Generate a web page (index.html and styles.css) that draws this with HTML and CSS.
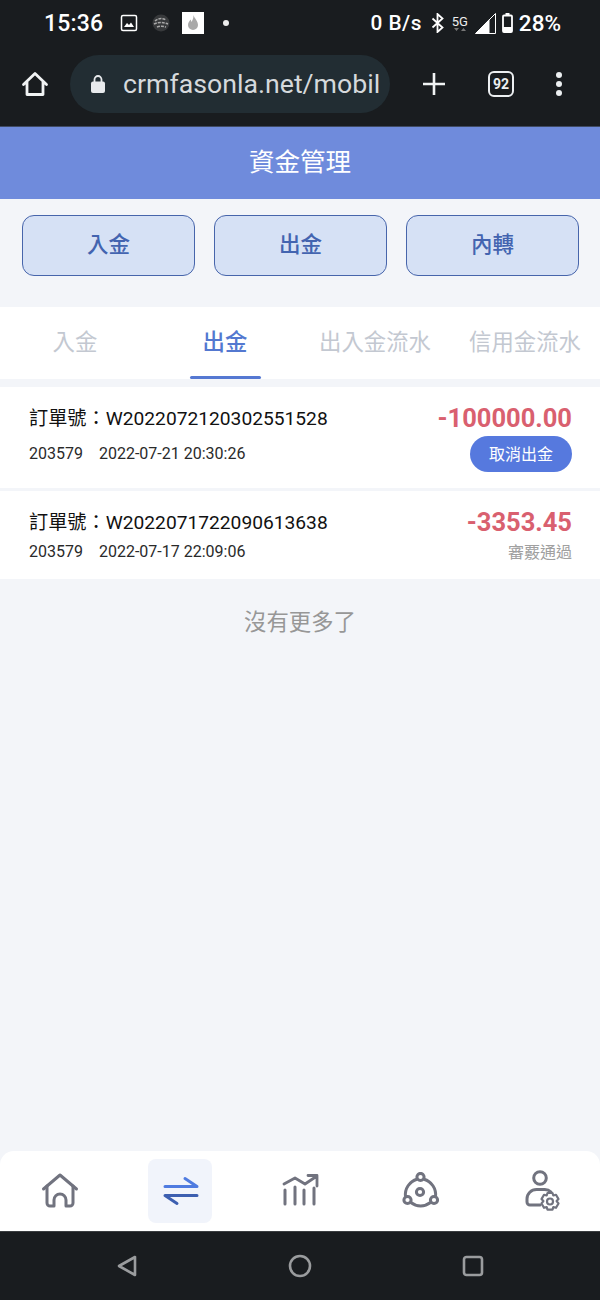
FILE: index.html
```html
<!DOCTYPE html>
<html lang="zh-Hant">
<head>
<meta charset="utf-8">
<title>資金管理</title>
<link rel="stylesheet" href="styles.css">
</head>
<body>
<div class="phone">
  <div class="status">
    <span class="time">15:36</span>
    <svg class="st-pic" width="18" height="18" viewBox="0 0 18 18"><rect x="1.500" y="1.500" width="15" height="15" rx="1.500" fill="none" stroke="#fff" stroke-width="1.500"/><path d="M4 13l3-4 2 2 2-2.500 3 4.500z" fill="#fff"/></svg>
    <svg class="st-ball" width="18" height="18" viewBox="0 0 18 18"><circle cx="9" cy="9" r="8.500" fill="#37393b"/><path d="M3 7c3-3 8-3 11-1M2 10c4-2 9-2 14 0M5 13c3-1 6-1 9 0" stroke="#a8a8a8" stroke-width="1.500" stroke-dasharray="3 1" fill="none"/></svg>
    <svg class="st-flame" width="22" height="22" viewBox="0 0 22 22"><rect width="22" height="22" fill="#fff"/><path d="M11.500 3c.5 3 4.500 5.500 4.500 10a5 5 0 0 1-10 0c0-2.500 1.500-3.500 2.500-5.500.5 1 .7 1.500 1 2.500 1-2 2.200-4 2-7z" fill="#a9a9a9"/></svg>
    <span class="st-dot"></span>
    <span class="st-fill"></span>
    <span class="net">0 B/s</span>
    <svg class="st-bt" width="13" height="20" viewBox="0 0 13 20"><path d="M1.500 5.500l10 9-5 4.500V1l5 4.500-10 9" fill="none" stroke="#fff" stroke-width="1.800"/></svg>
    <span class="five">5G<svg class="five-arrows" width="14" height="4" viewBox="0 0 14 4"><path d="M1 0h5L3.500 3zM8 3h5l-2.500-3z" fill="#777"/></svg></span>
    <svg class="st-sig" width="21" height="21" viewBox="0 0 21 21"><path d="M20.500 .5v20H.5z" fill="none" stroke="#fff"/><path d="M14.500 6v14.500H.5z" fill="#fff"/></svg>
    <svg class="st-bat" width="11" height="20" viewBox="0 0 11 20"><path d="M3.500 0h4v2H3.500z" fill="#fff"/><rect x="1" y="2.500" width="9" height="16.500" rx="1" fill="none" stroke="#fff" stroke-width="1.800"/><rect x="1" y="14" width="9" height="5" fill="#fff"/></svg>
    <span class="batt">28%</span>
  </div>
  <div class="toolbar">
    <svg class="tb-home" width="28" height="28" viewBox="0 0 28 28"><path d="M2.500 14.500 14 3.500l11.500 11M6 12v12.500h16V12" fill="none" stroke="#f1f3f4" stroke-width="2.800" stroke-linejoin="round" stroke-linecap="round"/></svg>
    <div class="omni">
      <svg class="lock" width="16" height="20" viewBox="0 0 16 20"><path d="M4.500 8V5.500a3.500 3.500 0 0 1 7 0V8" fill="none" stroke="#e8eaed" stroke-width="1.800"/><rect x="1" y="7.500" width="14" height="11.500" rx="2" fill="#e8eaed"/></svg>
      <span class="url">crmfasonla.net/mobil</span>
    </div>
    <svg class="tb-plus" width="24" height="24" viewBox="0 0 24 24"><path d="M12 1v22M1 12h22" stroke="#f1f3f4" stroke-width="2.600"/></svg>
    <span class="tabs-count">92</span>
    <span class="menu"><i></i><i></i><i></i></span>
  </div>
  <header class="title">資金管理</header>
  <div class="actions">
    <button class="act">入金</button>
    <button class="act">出金</button>
    <button class="act">內轉</button>
  </div>
  <nav class="tabs">
    <span class="tab">入金</span>
    <span class="tab on">出金</span>
    <span class="tab">出入金流水</span>
    <span class="tab">信用金流水</span>
  </nav>
  <section class="card first">
    <div class="col">
      <div class="order">訂單號：W2022072120302551528</div>
      <div class="meta meta-a"><span>203579</span><span>2022-07-21 20:30:26</span></div>
    </div>
    <div class="col right">
      <div class="amount">-100000.00</div>
      <button class="cancel">取消出金</button>
    </div>
  </section>
  <section class="card second">
    <div class="col">
      <div class="order">訂單號：W2022071722090613638</div>
      <div class="meta meta-b"><span>203579</span><span>2022-07-17 22:09:06</span></div>
    </div>
    <div class="col right">
      <div class="amount">-3353.45</div>
      <div class="state">審覈通過</div>
    </div>
  </section>
  <div class="nomore">沒有更多了</div>
  <div class="bottom">
    <span class="nav-item">
      <svg width="38" height="38" viewBox="0 0 38 38"><path d="M2.500 17 19 3l16.500 14" fill="none" stroke="#71737f" stroke-width="3" stroke-linecap="round" stroke-linejoin="round"/><path d="M6 14v17a3 3 0 0 0 3 3h4v-6a6 6 0 0 1 12 0v6h4a3 3 0 0 0 3-3V14" fill="none" stroke="#71737f" stroke-width="3" stroke-linecap="round" stroke-linejoin="round"/></svg>
    </span>
    <span class="nav-item active">
      <svg width="38" height="30" viewBox="0 0 38 30"><path d="M4 10.500h32L24 2.500" fill="none" stroke="#4f7be0" stroke-width="3" stroke-linecap="round" stroke-linejoin="round"/><path d="M36 19.500H4l12 8" fill="none" stroke="#3d5fb0" stroke-width="3" stroke-linecap="round" stroke-linejoin="round"/></svg>
    </span>
    <span class="nav-item">
      <svg width="38" height="36" viewBox="0 0 38 36"><path d="M4 17v14M14 14v17M23 17v14M33 15v16" fill="none" stroke="#71737f" stroke-width="3" stroke-linecap="round"/><path d="M3 11l11-6 10 6L36 3M27 2.500h9V13" fill="none" stroke="#71737f" stroke-width="2.800" stroke-linecap="round" stroke-linejoin="round"/></svg>
    </span>
    <span class="nav-item">
      <svg width="38" height="38" viewBox="0 0 38 38"><g fill="none" stroke="#71737f" stroke-width="3"><circle cx="19.500" cy="5" r="3.600"/><circle cx="6.500" cy="28" r="3.600"/><circle cx="33" cy="28" r="3.600"/><circle cx="19" cy="20" r="3.600"/><path d="M16 7.200A16 16 0 0 0 4.500 24.500M23 7.200a16 16 0 0 1 11.500 17.300M9.800 30.500a16 16 0 0 0 19.700 0"/></g></svg>
    </span>
    <span class="nav-item">
      <svg width="40" height="44" viewBox="0 0 40 44"><g fill="none" stroke="#71737f" stroke-width="3" stroke-linecap="round"><circle cx="20" cy="9" r="6.300"/><path d="M20 36H10a3 3 0 0 1-3-3v-3a9.500 9.500 0 0 1 9.500-9.500h8a9 9 0 0 1 6.500 2.500"/></g><g transform="translate(2.500 2.500)" fill="none" stroke="#71737f" stroke-width="2.200"><circle cx="27.500" cy="30" r="3"/><path d="M25 21.500h5l.8 2.500 2.700-.7 2.500 4.300-1.900 2 1.900 2.400-2.500 4.300-2.700-.7-.8 2.500h-5l-.8-2.500-2.700.7-2.500-4.300 1.900-2.400-1.900-2 2.500-4.300 2.700.7z" stroke-linejoin="round"/></g></svg>
    </span>
  </div>
  <div class="sysnav">
    <svg width="24" height="24" viewBox="0 0 24 24"><path d="M20 3v18L4 12z" fill="none" stroke="#9a9c9e" stroke-width="2.600" stroke-linejoin="round"/></svg>
    <svg width="24" height="24" viewBox="0 0 24 24"><circle cx="12" cy="12" r="10" fill="none" stroke="#9a9c9e" stroke-width="2.600"/></svg>
    <svg width="24" height="24" viewBox="0 0 24 24"><rect x="3" y="3" width="18" height="18" rx="2.500" fill="none" stroke="#9a9c9e" stroke-width="2.600"/></svg>
  </div>
</div>
</body>
</html>
```

FILE: styles.css
```css
* { box-sizing: border-box; }
html, body { margin: 0; padding: 0; }
body {
  width: 600px;
  height: 1300px;
  overflow: hidden;
  font-family: Roboto, "Noto Sans CJK TC", sans-serif;
  background: #f3f5f9;
}
.phone { display: flex; flex-direction: column; width: 600px; height: 1300px; }

.status {
  display: flex;
  align-items: center;
  height: 46px;
  padding: 0 39px 0 44px;
  background: #191c1f;
  color: #fff;
  flex: none;
}
.time { font-size: 23px; font-weight: 500; width: 76px; letter-spacing: .2px; }
.st-ball { margin-left: 14px; }
.st-flame { margin-left: 12px; }
.st-dot { width: 6px; height: 6px; border-radius: 50%; background: #ececec; margin-left: 19px; }
.st-fill { flex: 1; }
.net { font-size: 20.800px; font-weight: 500; letter-spacing: .5px; }
.st-bt { margin-left: 9px; }
.five { display: flex; flex-direction: column; align-items: center; font-size: 13px; line-height: 13px; margin-left: 8px; color: #eee; width: 16px; }
.five-arrows { display: block; }
.st-sig { margin-left: 7px; }
.st-bat { margin-left: 6px; }
.batt { font-size: 22.500px; font-weight: 500; margin-left: 6px; }

.toolbar {
  display: flex;
  align-items: center;
  height: 80px;
  padding: 0 0 4px 21px;
  background: #191c1f;
  flex: none;
}
.omni {
  display: flex;
  align-items: center;
  width: 320px;
  height: 58px;
  margin-left: 21px;
  padding-left: 20px;
  border-radius: 29px;
  background: #222d33;
  overflow: hidden;
}
.url { margin-left: 17px; font-size: 26.700px; color: #d5d9dc; white-space: nowrap; }
.tb-plus { margin-left: 32px; }
.tabs-count {
  display: flex;
  align-items: center;
  justify-content: center;
  width: 26px;
  height: 26px;
  margin-left: 42px;
  border: 2.500px solid #eceff1;
  border-radius: 6px;
  font-size: 14px;
  font-weight: 700;
  color: #eceff1;
}
.menu { display: flex; flex-direction: column; gap: 3px; margin-left: 42px; }
.menu i { display: block; width: 6px; height: 6px; border-radius: 50%; background: #eceff1; }

.title {
  flex: none;
  height: 73px;
  padding-bottom: 8px;
  border-top: 1px solid #3f4a63;
  display: flex;
  align-items: center;
  justify-content: center;
  background: #6f8bdc;
  color: #fff;
  font-size: 25.500px;
}

.actions {
  flex: none;
  display: flex;
  justify-content: space-between;
  padding: 16px 21px 0 22px;
  height: 108px;
}
.act {
  width: 173px;
  height: 61px;
  border: 1.500px solid #4765ab;
  border-radius: 12px;
  background: #d6e1f5;
  color: #4364b0;
  font-family: inherit;
  font-size: 21.500px;
  font-weight: 500;
  padding: 0 0 7px;
}

.tabs {
  flex: none;
  display: grid;
  grid-template-columns: repeat(4, 150px);
  height: 72px;
  background: #fff;
}
.tab {
  display: flex;
  align-items: center;
  justify-content: center;
  padding-bottom: 6px;
  font-size: 22.400px;
  color: #c3c8d1;
  position: relative;
}
.tab.on { color: #5378d0; font-weight: 500; }
.tab.on::after {
  content: "";
  position: absolute;
  left: 40px;
  width: 71px;
  bottom: 0;
  height: 3px;
  border-radius: 2px;
  background: #5578d2;
}

.card {
  flex: none;
  display: flex;
  justify-content: space-between;
  background: #fff;
  padding: 18px 28px 0 29px;
}
.card.first { height: 101px; margin-top: 8px; }
.card.second { height: 88px; margin-top: 3px; }
.col { display: flex; flex-direction: column; }
.right { align-items: flex-end; }
.order { font-size: 19.200px; line-height: 27px; color: #111; white-space: nowrap; }
.meta { font-size: 16px; line-height: 20px; color: #2a2a2a; display: flex; gap: 16px; }
.meta-a { margin-top: 12px; }
.meta-b { margin-top: 6px; }
.amount { margin-top: -2px; font-size: 25.500px; line-height: 30px; font-weight: 700; color: #d9606f; }
.cancel {
  margin-top: 3px;
  width: 102px;
  height: 36px;
  border: 0;
  border-radius: 18px;
  background: #5679de;
  color: #fff;
  font-family: inherit;
  font-size: 16px;
  padding: 0 0 2px;
}
.state { margin-top: 5px; font-size: 16px; line-height: 22px; color: #a0a0a0; }

.nomore {
  flex: 1;
  padding-top: 27px;
  text-align: center;
  font-size: 22.400px;
  line-height: 32px;
  color: #979797;
}

.bottom {
  flex: none;
  display: grid;
  grid-template-columns: repeat(5, 120px);
  place-items: center;
  height: 80px;
  background: #fff;
  border-radius: 14px 14px 0 0;
}
.nav-item {
  display: flex;
  align-items: center;
  justify-content: center;
  width: 64px;
  height: 64px;
  border-radius: 8px;
}
.nav-item.active { background: #f1f4fb; }

.sysnav {
  flex: none;
  height: 69px;
  border-top: 1px solid #3a3d40;
  display: grid;
  grid-template-columns: repeat(3, 173px);
  justify-content: center;
  justify-items: center;
  align-items: center;
  background: #191c1f;
}
```
